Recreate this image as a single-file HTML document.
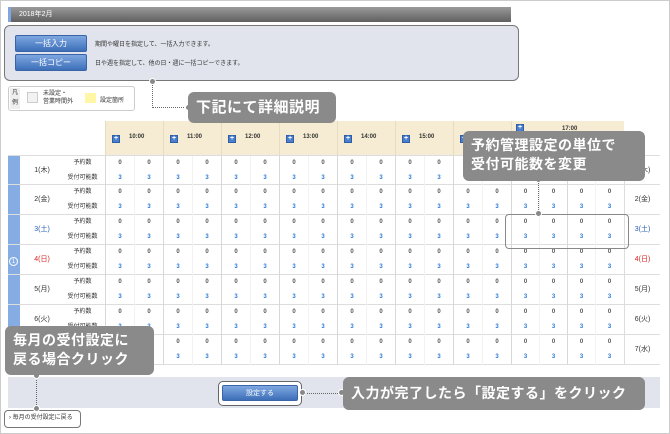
<!DOCTYPE html>
<html><head><meta charset="utf-8"><style>
*{box-sizing:border-box;margin:0;padding:0}
body{width:670px;height:434px;position:relative;overflow:hidden;background:#fff;font-family:"Liberation Sans","Noto Sans CJK JP",sans-serif;font-size:7px;color:#333}
.a{position:absolute}
.frame{left:0;top:0;width:670px;height:434px;border:1px solid #ccc}
.hbar{left:8px;top:7px;width:503px;height:15px;background:linear-gradient(#9a9a9a,#5f5f5f);border-left:3px solid #7fa6de;color:#fff;font-size:7px;line-height:15px;padding-left:8px}
.panel{left:4px;top:25px;width:515px;height:56px;background:#e1e4ec;border:1.5px solid #777;border-radius:6px}
.btn{background:linear-gradient(#7ea7e0,#3d6fb8);color:#fff;border:1px solid #3a64a8;border-radius:2px;text-align:center;font-size:8px}
.cal{background:#8a8a8a;color:#fff;font-weight:bold;border-radius:6px;font-size:14px;line-height:20px;padding:5px 8px;letter-spacing:.5px}
.dot{width:7px;height:7px;border-radius:50%;background:#888;border:1px solid #fff}
.thead{left:105px;top:121px;width:519px;height:34px;background:#f6ecd3}
.tg{position:absolute;top:0;height:34px;border-left:1px solid #e6dcc0;font-size:6px;font-weight:bold}
.ic{position:absolute;left:6px;top:14px;width:8px;height:8px;background:#4a7fcc;border:1px solid #2e5ea8;color:#fff;font-size:7px;line-height:6px;text-align:center}
.tl{position:absolute;left:23px;top:13px}
.rows{left:8px;top:155px;width:652px}
.day{position:relative;height:30px;border-bottom:1px solid #ddd}
.r{position:absolute;left:97px;height:15px;display:flex}
.r b{display:block;width:29px;text-align:center;font-size:6px;line-height:15px;font-weight:bold;color:#555;border-left:1px solid #f2f2f2}
.r b:nth-child(odd){border-left:1px solid #d8d8d8}
.r b.n{width:28px}
.r.u b{color:#2a7ad8}
.dl{position:absolute;left:14px;width:40px;top:0;line-height:30px;text-align:center;font-size:7px}
.lb{position:absolute;left:52px;width:45px;text-align:center;font-size:6px;line-height:15px}
.rl{position:absolute;left:616px;width:36px;line-height:30px;text-align:center;font-size:7px;border-left:1px solid #ddd;height:30px}
</style></head><body>
<div class="a frame"></div>
<div class="a hbar">2018年2月</div>
<div class="a panel"></div>
<div class="a btn" style="left:15px;top:35px;width:72px;height:17px;line-height:16px">一括入力</div>
<div class="a btn" style="left:15px;top:54px;width:72px;height:17px;line-height:16px">一括コピー</div>
<div class="a" style="left:95px;top:39px;font-size:6px">期間や曜日を指定して、一括入力できます。</div>
<div class="a" style="left:95px;top:58px;font-size:6px">日や週を指定して、他の日・週に一括コピーできます。</div>
<div class="a" style="left:8px;top:86px;width:127px;height:25px;border:1px solid #ccc;border-radius:3px;background:#fff"></div>
<div class="a" style="left:10px;top:88px;width:10px;height:21px;background:#eee;font-size:6px;text-align:center;line-height:10px">凡例</div>
<div class="a" style="left:27px;top:92px;width:11px;height:11px;border:1px solid #ccc;background:#f2f2f2"></div>
<div class="a" style="left:43px;top:90px;font-size:6px;line-height:8px">未設定・<br>営業時間外</div>
<div class="a" style="left:85px;top:93px;width:11px;height:10px;background:#fff7a6"></div>
<div class="a" style="left:100px;top:95px;font-size:6px">設定箇所</div>
<div class="a" style="left:152px;top:82px;width:1px;height:26px;border-left:1px dotted #666"></div>
<div class="a" style="left:152px;top:107px;width:36px;height:1px;border-top:1px dotted #666"></div>
<div class="a dot" style="left:149px;top:78px"></div>
<div class="a dot" style="left:185px;top:104px"></div>
<div class="a thead">
<div class="tg" style="left:0;width:58px"><span class="ic">+</span><span class="tl">10:00</span></div>
<div class="tg" style="left:58px;width:58px"><span class="ic">+</span><span class="tl">11:00</span></div>
<div class="tg" style="left:116px;width:58px"><span class="ic">+</span><span class="tl">12:00</span></div>
<div class="tg" style="left:174px;width:58px"><span class="ic">+</span><span class="tl">13:00</span></div>
<div class="tg" style="left:232px;width:58px"><span class="ic">+</span><span class="tl">14:00</span></div>
<div class="tg" style="left:290px;width:58px"><span class="ic">+</span><span class="tl">15:00</span></div>
<div class="tg" style="left:348px;width:58px"><span class="ic">+</span><span class="tl">16:00</span></div>
<div class="tg" style="left:406px;width:113px"><span class="ic" style="left:4px;top:3px">+</span><span class="tl" style="left:50px;top:5px">17:00</span></div>
</div>
<div class="a" style="left:8px;top:155px;width:12px;height:210px;background:#86ade3"></div>
<div class="a" style="left:9px;top:257px;width:9px;height:9px;border:1px solid #fff;border-radius:50%;color:#fff;font-size:6px;text-align:center;line-height:8px">1</div>
<div class="a rows">
<div class="day" style="border-top:1px solid #ddd"><div class="dl">1(木)</div><div class="lb" style="top:0">予約数</div><div class="lb" style="top:15px">受付可能数</div><div class="r" style="top:0"><b>0</b><b>0</b><b>0</b><b>0</b><b>0</b><b>0</b><b>0</b><b>0</b><b>0</b><b>0</b><b>0</b><b>0</b><b>0</b><b>0</b><b class="n">0</b><b class="n">0</b><b class="n">0</b><b class="n">0</b></div><div class="r u" style="top:15px"><b>3</b><b>3</b><b>3</b><b>3</b><b>3</b><b>3</b><b>3</b><b>3</b><b>3</b><b>3</b><b>3</b><b>3</b><b>3</b><b>3</b><b class="n">3</b><b class="n">3</b><b class="n">3</b><b class="n">3</b></div><div class="rl">1(木)</div></div>
<div class="day"><div class="dl">2(金)</div><div class="lb" style="top:0">予約数</div><div class="lb" style="top:15px">受付可能数</div><div class="r" style="top:0"><b>0</b><b>0</b><b>0</b><b>0</b><b>0</b><b>0</b><b>0</b><b>0</b><b>0</b><b>0</b><b>0</b><b>0</b><b>0</b><b>0</b><b class="n">0</b><b class="n">0</b><b class="n">0</b><b class="n">0</b></div><div class="r u" style="top:15px"><b>3</b><b>3</b><b>3</b><b>3</b><b>3</b><b>3</b><b>3</b><b>3</b><b>3</b><b>3</b><b>3</b><b>3</b><b>3</b><b>3</b><b class="n">3</b><b class="n">3</b><b class="n">3</b><b class="n">3</b></div><div class="rl">2(金)</div></div>
<div class="day"><div class="dl" style="color:#2a5cb8">3(土)</div><div class="lb" style="top:0">予約数</div><div class="lb" style="top:15px">受付可能数</div><div class="r" style="top:0"><b>0</b><b>0</b><b>0</b><b>0</b><b>0</b><b>0</b><b>0</b><b>0</b><b>0</b><b>0</b><b>0</b><b>0</b><b>0</b><b>0</b><b class="n">0</b><b class="n">0</b><b class="n">0</b><b class="n">0</b></div><div class="r u" style="top:15px"><b>3</b><b>3</b><b>3</b><b>3</b><b>3</b><b>3</b><b>3</b><b>3</b><b>3</b><b>3</b><b>3</b><b>3</b><b>3</b><b>3</b><b class="n">3</b><b class="n">3</b><b class="n">3</b><b class="n">3</b></div><div class="rl" style="color:#2a5cb8">3(土)</div></div>
<div class="day"><div class="dl" style="color:#d22">4(日)</div><div class="lb" style="top:0">予約数</div><div class="lb" style="top:15px">受付可能数</div><div class="r" style="top:0"><b>0</b><b>0</b><b>0</b><b>0</b><b>0</b><b>0</b><b>0</b><b>0</b><b>0</b><b>0</b><b>0</b><b>0</b><b>0</b><b>0</b><b class="n">0</b><b class="n">0</b><b class="n">0</b><b class="n">0</b></div><div class="r u" style="top:15px"><b>3</b><b>3</b><b>3</b><b>3</b><b>3</b><b>3</b><b>3</b><b>3</b><b>3</b><b>3</b><b>3</b><b>3</b><b>3</b><b>3</b><b class="n">3</b><b class="n">3</b><b class="n">3</b><b class="n">3</b></div><div class="rl" style="color:#d22">4(日)</div></div>
<div class="day"><div class="dl">5(月)</div><div class="lb" style="top:0">予約数</div><div class="lb" style="top:15px">受付可能数</div><div class="r" style="top:0"><b>0</b><b>0</b><b>0</b><b>0</b><b>0</b><b>0</b><b>0</b><b>0</b><b>0</b><b>0</b><b>0</b><b>0</b><b>0</b><b>0</b><b class="n">0</b><b class="n">0</b><b class="n">0</b><b class="n">0</b></div><div class="r u" style="top:15px"><b>3</b><b>3</b><b>3</b><b>3</b><b>3</b><b>3</b><b>3</b><b>3</b><b>3</b><b>3</b><b>3</b><b>3</b><b>3</b><b>3</b><b class="n">3</b><b class="n">3</b><b class="n">3</b><b class="n">3</b></div><div class="rl">5(月)</div></div>
<div class="day"><div class="dl">6(火)</div><div class="lb" style="top:0">予約数</div><div class="lb" style="top:15px">受付可能数</div><div class="r" style="top:0"><b>0</b><b>0</b><b>0</b><b>0</b><b>0</b><b>0</b><b>0</b><b>0</b><b>0</b><b>0</b><b>0</b><b>0</b><b>0</b><b>0</b><b class="n">0</b><b class="n">0</b><b class="n">0</b><b class="n">0</b></div><div class="r u" style="top:15px"><b>3</b><b>3</b><b>3</b><b>3</b><b>3</b><b>3</b><b>3</b><b>3</b><b>3</b><b>3</b><b>3</b><b>3</b><b>3</b><b>3</b><b class="n">3</b><b class="n">3</b><b class="n">3</b><b class="n">3</b></div><div class="rl">6(火)</div></div>
<div class="day"><div class="dl">7(水)</div><div class="lb" style="top:0">予約数</div><div class="lb" style="top:15px">受付可能数</div><div class="r" style="top:0"><b>0</b><b>0</b><b>0</b><b>0</b><b>0</b><b>0</b><b>0</b><b>0</b><b>0</b><b>0</b><b>0</b><b>0</b><b>0</b><b>0</b><b class="n">0</b><b class="n">0</b><b class="n">0</b><b class="n">0</b></div><div class="r u" style="top:15px"><b>3</b><b>3</b><b>3</b><b>3</b><b>3</b><b>3</b><b>3</b><b>3</b><b>3</b><b>3</b><b>3</b><b>3</b><b>3</b><b>3</b><b class="n">3</b><b class="n">3</b><b class="n">3</b><b class="n">3</b></div><div class="rl">7(水)</div></div>
</div>
<div class="a" style="left:8px;top:377px;width:652px;height:31px;background:#e1e4ec"></div>
<div class="a" style="left:218px;top:381px;width:84px;height:25px;border:1.5px solid #666;border-radius:5px;background:#fff"></div>
<div class="a btn" style="left:222px;top:385px;width:76px;height:16px;line-height:15px;font-size:7px">設定する</div>
<div class="a" style="left:302px;top:393px;width:40px;border-top:1px dotted #666"></div>
<div class="a dot" style="left:299px;top:389px"></div>
<div class="a dot" style="left:338px;top:389px"></div>
<div class="a cal" style="left:343px;top:377px;width:302px;height:33px;line-height:23px">入力が完了したら「設定する」をクリック</div>
<div class="a" style="left:505px;top:214px;width:124px;height:35px;border:1.5px solid #888;border-radius:4px"></div>
<div class="a" style="left:538px;top:180px;height:34px;border-left:1px dotted #666"></div>
<div class="a dot" style="left:535px;top:176px"></div>
<div class="a dot" style="left:535px;top:210px"></div>
<div class="a cal" style="left:463px;top:131px;width:182px;height:50px;line-height:19px;padding-top:5px">予約管理設定の単位で<br>受付可能数を変更</div>
<div class="a cal" style="left:188px;top:92px;width:148px;height:31px;line-height:21px;font-size:15px">下記にて詳細説明</div>
<div class="a" style="left:4px;top:410px;width:77px;height:18px;border:1.5px solid #777;border-radius:4px;background:#fff;font-size:6px;line-height:15px;padding-left:4px">› 毎月の受付設定に戻る</div>
<div class="a" style="left:36px;top:375px;height:34px;border-left:1px dotted #666"></div>
<div class="a dot" style="left:33px;top:372px"></div>
<div class="a dot" style="left:33px;top:405px"></div>
<div class="a cal" style="left:5px;top:326px;width:149px;height:49px;line-height:19px;padding-top:5px">毎月の受付設定に<br>戻る場合クリック</div>
</body></html>
